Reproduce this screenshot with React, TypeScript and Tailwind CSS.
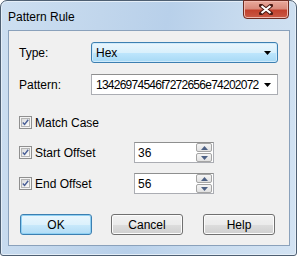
import React from "react";

const font = "font-['Liberation_Sans',Arial,sans-serif]";

function Arrow() {
  return (
    <svg width="7" height="4" viewBox="0 0 7 4">
      <path d="M0 0H7L3.5 4Z" fill="#000" />
    </svg>
  );
}

function CheckBox({ label }: { label: string }) {
  return (
    <div className="flex items-center gap-[3px]">
      <div className="w-[13px] h-[13px] border border-[#8f8f8f] bg-[#f4f4f4] p-[1px]">
        <div className="w-full h-full border border-[#b5b5b5] bg-[linear-gradient(135deg,#dcdcdc,#fbfbfb)] flex items-center justify-center">
          <svg width="9" height="9" viewBox="0 0 9 9">
            <path d="M1 4.5L3.3 7L8 1" stroke="#4a5f97" strokeWidth="1.8" fill="none" />
          </svg>
        </div>
      </div>
      <span className="text-[12px] text-black leading-none">{label}</span>
    </div>
  );
}

function SpinArrow({ up }: { up?: boolean }) {
  return (
    <div className="h-[9px] w-[16px] border border-[#a5a5a5] rounded-[2px] bg-[linear-gradient(#f5f5f5,#e1e1e1)] flex items-center justify-center">
      <svg width="7" height="4" viewBox="0 0 7 4">
        {up ? <path d="M0 4H7L3.5 0Z" fill="#4d6185" /> : <path d="M0 0H7L3.5 4Z" fill="#4d6185" />}
      </svg>
    </div>
  );
}

function Spin({ value }: { value: string }) {
  return (
    <div className="w-[80px] h-[21px] border border-[#abadb3] border-t-[#8e8f8f] bg-white flex items-center justify-between pl-[3px] pr-[1px]">
      <span className="text-[12px] text-black">{value}</span>
      <div className="flex flex-col gap-[1px]">
        <SpinArrow up />
        <SpinArrow />
      </div>
    </div>
  );
}

function Btn({ label, primary }: { label: string; primary?: boolean }) {
  return (
    <div
      className={
        "w-[72px] h-[21px] rounded-[3px] border flex items-center justify-center text-[12px] text-black " +
        (primary
          ? "border-[#3c7fb1] bg-[linear-gradient(#eaf6fd_0%,#dcf1fc_50%,#c9e9fb_51%,#b2dcf5_100%)] shadow-[inset_0_0_0_1px_#8fd0f3]"
          : "border-[#707070] bg-[linear-gradient(#f2f2f2_0%,#ebebeb_50%,#dddddd_51%,#cfcfcf_100%)] shadow-[inset_0_0_0_1px_#fcfcfc]")
      }
    >
      {label}
    </div>
  );
}

export default function App() {
  return (
    <div className={`${font} w-[297px] h-[256px] bg-white`}>
      <div className="w-[297px] h-[256px] rounded-t-[7px] rounded-b-[3px] border border-[#4e5f72] bg-[linear-gradient(100deg,#cddff1_0%,#c1d6ec_30%,#b8d0ea_50%,#c9dcef_75%,#d3e3f3_100%)] px-[6px] flex flex-col shadow-[inset_0_0_0_1px_#e4eef8]">
        <div className="h-[29px] flex justify-between items-start">
          <span className="text-[12px] text-black pt-[7px] pl-[1px]">Pattern Rule</span>
          <div className="w-[46px] h-[19px] mt-[-1px] mr-[1px] rounded-b-[4px] border border-[#6e2c22] bg-[linear-gradient(#e9a99c_0%,#d98a7c_45%,#c2412d_55%,#c95a46_100%)] flex items-center justify-center shadow-[inset_0_0_0_1px_#f0b8ae]">
            <svg width="14" height="11" viewBox="0 0 14 11">
              <path d="M2 1.5L12 9.5M12 1.5L2 9.5" stroke="#4a1a13" strokeWidth="4" strokeLinecap="round" />
              <path d="M2.5 2L11.5 9M11.5 2L2.5 9" stroke="#ffffff" strokeWidth="2.2" />
            </svg>
          </div>
        </div>
        <div className="h-[216px] border border-[#8aa1bb] bg-[#f0f0f0] ml-[1px] pt-[11px] pl-[10px] pr-[10px] flex flex-col">
          <div className="flex items-center h-[21px]">
            <span className="w-[72px] text-[12px] text-black">Type:</span>
            <div className="w-[187px] h-[21px] rounded-[3px] border border-[#3c7fb1] bg-[linear-gradient(#eaf6fd_0%,#d9f0fc_50%,#bee6fd_51%,#a7d9f5_100%)] flex items-center justify-between pl-[4px] pr-[6px] shadow-[inset_0_0_0_1px_#cfeafb]">
              <span className="text-[12px] text-black">Hex</span>
              <Arrow />
            </div>
          </div>
          <div className="flex items-center h-[21px] mt-[11px]">
            <span className="w-[72px] text-[12px] text-black">Pattern:</span>
            <div className="w-[187px] h-[21px] border border-[#abadb3] border-t-[#8e8f8f] bg-white flex items-center pl-[4px] pr-[6px]">
              <span className="text-[12px] text-black flex-1 overflow-hidden whitespace-nowrap tracking-[-0.75px]">13426974546f7272656e74202072</span>
              <div className="w-[12px] flex justify-end">
                <Arrow />
              </div>
            </div>
          </div>
          <div className="mt-[21px]">
            <CheckBox label="Match Case" />
          </div>
          <div className="flex items-center mt-[13px]">
            <div className="w-[115px]">
              <CheckBox label="Start Offset" />
            </div>
            <Spin value="36" />
          </div>
          <div className="flex items-center mt-[10px]">
            <div className="w-[115px]">
              <CheckBox label="End Offset" />
            </div>
            <Spin value="56" />
          </div>
          <div className="flex mt-[20px] pl-[1px] gap-[19px]">
            <Btn label="OK" primary />
            <Btn label="Cancel" />
            <div className="ml-[1px]">
              <Btn label="Help" />
            </div>
          </div>
        </div>
      </div>
    </div>
  );
}
